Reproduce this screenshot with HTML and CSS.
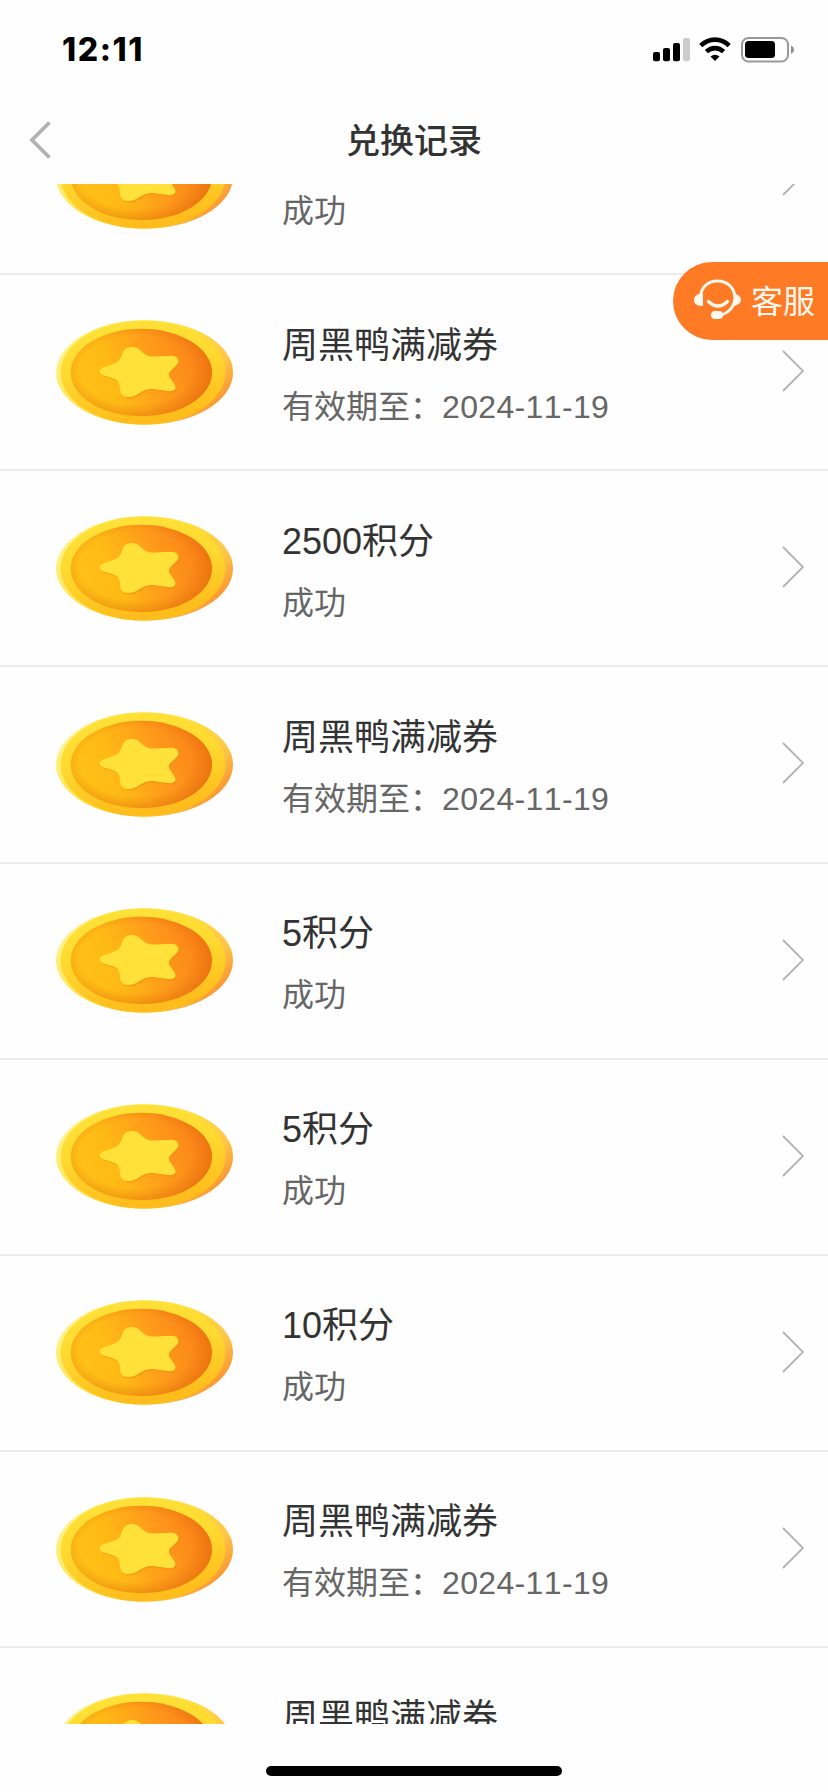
FILE: index.html
```html
<!DOCTYPE html>
<html lang="zh-CN">
<head>
<meta charset="utf-8">
<title>兑换记录</title>
<link rel="stylesheet" href="styles.css">
</head>
<body>
<svg class="defs" width="0" height="0" aria-hidden="true">
  <defs>
    <linearGradient id="rim" x1="0" y1="0.2" x2="1" y2="0.8">
      <stop offset="0" stop-color="#fff6a8"/><stop offset="0.12" stop-color="#fff07a"/><stop offset="0.5" stop-color="#ffdf40"/><stop offset="0.78" stop-color="#ffc548"/><stop offset="1" stop-color="#f98328"/>
    </linearGradient>
    <linearGradient id="edge" x1="0" y1="0" x2="0.25" y2="1">
      <stop offset="0" stop-color="#ffe33a"/><stop offset="0.5" stop-color="#ffda30"/><stop offset="1" stop-color="#ffbd1c"/>
    </linearGradient>
    <linearGradient id="face" x1="0" y1="0.6" x2="1" y2="0.4">
      <stop offset="0" stop-color="#ffc418"/><stop offset="0.3" stop-color="#ffb915"/><stop offset="0.65" stop-color="#ff981b"/><stop offset="1" stop-color="#fa7f17"/>
    </linearGradient>
    <radialGradient id="shade" cx="0.46" cy="0.47" r="0.56">
      <stop offset="0.7" stop-color="#e06a08" stop-opacity="0"/><stop offset="1" stop-color="#d86408" stop-opacity="0.5"/>
    </radialGradient>
    <symbol id="coin" viewBox="48 60 531 314">
      <ellipse cx="313.500" cy="217" rx="265.500" ry="157" fill="url(#rim)"/>
      <ellipse cx="309" cy="217" rx="247" ry="156" fill="url(#edge)"/>
      <ellipse cx="304" cy="217" rx="212" ry="131" fill="url(#face)"/>
      <ellipse cx="304" cy="217" rx="212" ry="131" fill="url(#shade)"/>
      <path transform="translate(3 4)" fill="#e88a10" opacity=".5" d="M247 160C255 136 288 136 302 152C317 166 326 170 345 169L394 167C413 167 421 182 411 194L391 213C385 220 386 226 390 233L404 253C411 266 402 274 388 273L345 267C325 265 315 269 300 278C286 289 268 294 253 288C240 282 240 270 239 255C237 244 230 237 218 234L191 226C176 221 175 207 190 202L224 190C236 185 240 180 247 160Z"/>
      <path fill="#ffe13a" d="M247 160C255 136 288 136 302 152C317 166 326 170 345 169L394 167C413 167 421 182 411 194L391 213C385 220 386 226 390 233L404 253C411 266 402 274 388 273L345 267C325 265 315 269 300 278C286 289 268 294 253 288C240 282 240 270 239 255C237 244 230 237 218 234L191 226C176 221 175 207 190 202L224 190C236 185 240 180 247 160Z"/>
    </symbol>
    <symbol id="chevron" viewBox="0 0 22 42">
      <path d="M1 1L21 21L1 41" fill="none" stroke="#b4b4b4" stroke-width="1.900"/>
    </symbol>
  </defs>
</svg>
<div class="screen">
  <header class="status">
    <span class="time">12:11</span>
    <div class="indicators">
      <svg class="signal" viewBox="0 0 37 24"><rect y="14" width="7" height="9.300" rx="2"/><rect x="10" y="10" width="7" height="13.300" rx="2"/><rect x="20" y="5" width="7" height="18.300" rx="2"/><rect x="30" width="7" height="23.300" rx="2" fill="#ccc"/></svg>
      <svg class="wifi" viewBox="0 0 32 24"><g fill="none" stroke="#000" stroke-width="4.600"><path d="M1.800 8.600C10 .6 22 .6 30.200 8.600"/><path d="M7.400 14.700C12.500 9.900 19.500 9.900 24.600 14.700"/></g><path d="M11.500 19.500Q16 15.800 20.500 19.500L16 24Z"/></svg>
      <svg class="battery" viewBox="0 0 53 26"><rect x="1" y="1" width="46" height="23.500" rx="6.500" fill="none" stroke="#999" stroke-width="2"/><rect x="4" y="4" width="30" height="17" rx="3.500"/><path d="M50 8.500Q53 10 53 12.700T50 17Z" fill="#8c8c8c"/></svg>
    </div>
  </header>
  <nav class="nav">
    <svg class="back" viewBox="0 0 22 38"><path d="M20.500 1.500L3 19L20.500 36.500" fill="none" stroke="#b2b2b2" stroke-width="3.800"/></svg>
    <h1 class="nav-title">兑换记录</h1>
  </nav>
  <main class="list-view">
    <ul class="list">
      <li class="row row-first"><svg class="coin"><use href="#coin"/></svg><div class="info"><p class="note">成功</p></div><svg class="chevron"><use href="#chevron"/></svg></li>
      <li class="row"><svg class="coin"><use href="#coin"/></svg><div class="info"><p class="name">周黑鸭满减券</p><p class="note">有效期至：<span class="date">2024-11-19</span></p></div><svg class="chevron"><use href="#chevron"/></svg></li>
      <li class="row"><svg class="coin"><use href="#coin"/></svg><div class="info"><p class="name">2500积分</p><p class="note">成功</p></div><svg class="chevron"><use href="#chevron"/></svg></li>
      <li class="row"><svg class="coin"><use href="#coin"/></svg><div class="info"><p class="name">周黑鸭满减券</p><p class="note">有效期至：<span class="date">2024-11-19</span></p></div><svg class="chevron"><use href="#chevron"/></svg></li>
      <li class="row"><svg class="coin"><use href="#coin"/></svg><div class="info"><p class="name">5积分</p><p class="note">成功</p></div><svg class="chevron"><use href="#chevron"/></svg></li>
      <li class="row"><svg class="coin"><use href="#coin"/></svg><div class="info"><p class="name">5积分</p><p class="note">成功</p></div><svg class="chevron"><use href="#chevron"/></svg></li>
      <li class="row"><svg class="coin"><use href="#coin"/></svg><div class="info"><p class="name">10积分</p><p class="note">成功</p></div><svg class="chevron"><use href="#chevron"/></svg></li>
      <li class="row"><svg class="coin"><use href="#coin"/></svg><div class="info"><p class="name">周黑鸭满减券</p><p class="note">有效期至：<span class="date">2024-11-19</span></p></div><svg class="chevron"><use href="#chevron"/></svg></li>
      <li class="row"><svg class="coin"><use href="#coin"/></svg><div class="info"><p class="name">周黑鸭满减券</p></div></li>
    </ul>
  </main>
  <footer class="home"><div class="home-bar"></div></footer>
  <a class="service">
    <svg class="headset" viewBox="0 0 47 40"><g fill="none" stroke="#fff8ee" stroke-linecap="round"><path d="M6.500 18C7 8 14 2 23.500 2S40 8 41 18C41 27 35 34.500 25 36.500" stroke-width="3"/><path d="M14.500 22.500Q24 31.500 33.500 22.500" stroke-width="3.400"/></g><path fill="#fff8ee" d="M9 15V27Q0 27 0 21Q0 16.500 5 15ZM40 14L43 15.500Q47 17 47 21T40 27Z"/><rect x="17" y="32" width="12" height="8" rx="4" fill="#fff8ee"/></svg>
    <span class="service-label">客服</span>
  </a>
</div>
</body>
</html>
```
FILE: styles.css
```css
* { box-sizing: border-box; margin: 0; padding: 0; }
body { background: #fefefe; font-family: "Liberation Sans", "Noto Sans CJK SC", sans-serif; font-kerning: none; }
.defs { position: absolute; }
.screen { position: relative; display: flex; flex-direction: column; width: 828px; height: 1792px; overflow: hidden; }
.status { display: flex; justify-content: space-between; height: 96px; padding: 0 34px 0 62px; }
.time { padding-top: 30px; font: 800 32px/40px Inter, sans-serif; letter-spacing: 1.6px; color: #000; }
.indicators { display: flex; align-items: flex-start; padding-top: 37px; }
.signal { width: 37px; height: 24px; margin: 1px 9px 0 0; }
.wifi { width: 32px; height: 24px; margin-right: 10px; }
.battery { width: 53px; height: 26px; }
.nav { display: grid; grid-template-columns: 60px 1fr 60px; align-items: center; height: 88px; }
.back { width: 22px; height: 38px; margin: 0 0 0 29px; }
.nav-title { padding-top: 1px; text-align: center; font-size: 34px; line-height: 50px; font-weight: 500; color: #333; }
.list-view { height: 1540px; overflow: hidden; }
.list { margin-top: -105px; list-style: none; }
.row { display: flex; align-items: flex-start; height: 196.130px; padding: 0 24px 0 56px; border-bottom: 2px solid #ececec; }
.coin { flex: none; width: 177px; height: 105px; margin-top: 44.700px; }
.info { flex: 1; padding: 43.400px 0 0 49px; }
.row-first .info { padding-top: 98px; }
.name { font-size: 36px; line-height: 54px; color: #333; }
.note { margin-top: 10px; font-size: 32px; line-height: 48px; color: #666; }
.date { letter-spacing: 0.35px; }
.chevron { flex: none; width: 22px; height: 42px; margin-top: 75px; }
.home { display: flex; justify-content: center; padding-top: 42px; }
.home-bar { width: 296px; height: 10px; border-radius: 5px; background: #000; }
.service { position: absolute; top: 262px; right: 0; display: flex; align-items: center; width: 155px; height: 78px; padding-left: 21px; border-radius: 39px 0 0 39px; background: #ff7a24; }
.headset { width: 47px; height: 40px; margin-right: 10px; margin-top: -4px; }
.service-label { padding-top: 1px; font-size: 32px; line-height: 48px; color: #fff8ee; }
```
